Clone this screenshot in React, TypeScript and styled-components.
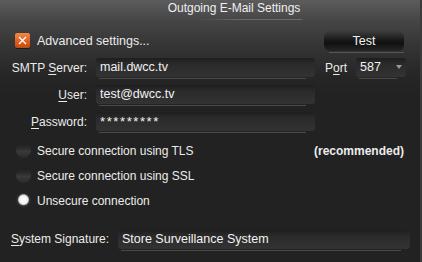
// Outgoing e-mail settings panel

import * as React from 'react'
import styled, { createGlobalStyle } from 'styled-components'

// ___________________________________________________________________

const Global = createGlobalStyle`
  html, body {
    margin: 0;
    padding: 0;
    background: #222;
  }
  body {
    font-family: "Liberation Sans", Arial, sans-serif;
    font-size: 12px;
    color: #ececec;
    -webkit-font-smoothing: none;
  }
`

const Window = styled.div`
  width: 422px;
  height: 262px;
  box-sizing: border-box;
  border-right: 2px solid #3b3b3b;
  background: linear-gradient(
    to bottom,
    #5c5c5c 0px,
    #464646 20px,
    #353535 45px,
    #262626 75px,
    #222 95px
  );
  display: flex;
  flex-direction: column;
  overflow: hidden;
  white-space: nowrap;
`

const Title = styled.div`
  height: 20px;
  display: flex;
  justify-content: center;
  padding-left: 48px;
  font-size: 12px;
  line-height: 17px;
  color: #f0f0f0;
`

const TitleText = styled.span`
  position: relative;
  &::after {
    content: '';
    position: absolute;
    left: 30px;
    right: -2px;
    bottom: 0;
    height: 1px;
    background: linear-gradient(to right, transparent, #6a6a6a 40%, #6a6a6a);
  }
`

const TopRow = styled.div`
  display: flex;
  align-items: center;
  justify-content: space-between;
  height: 21px;
  margin-top: 10px;
  padding: 0 16px 0 15px;
`

const CheckLabel = styled.label`
  display: flex;
  align-items: center;
  gap: 7px;
  font-size: 12.5px;
`

const CheckBox = styled.span`
  width: 15px;
  height: 15px;
  border-radius: 2px;
  background: linear-gradient(to bottom, #f08a4a 0%, #e0601c 55%, #c04a10 100%);
  box-shadow: 0 1px 0 #1a1a1a;
  display: flex;
  align-items: center;
  justify-content: center;
`

const TestButton = styled.button`
  position: relative;
  width: 80px;
  height: 20px;
  border: none;
  border-radius: 6px;
  background: linear-gradient(to bottom, #3c3c3c 0%, #1a1a1a 45%, #101010 60%, #262626 100%);
  color: #f2f2f2;
  font-family: inherit;
  font-size: 12.5px;
  padding: 0;
  &::after {
    content: '';
    position: absolute;
    left: 5px;
    right: 0;
    bottom: -2px;
    height: 1px;
    background: #555;
  }
`

const Form = styled.div`
  display: flex;
  flex-direction: column;
  gap: 8px;
  margin-top: 7px;
  padding-left: 7px;
`

const Row = styled.div`
  display: flex;
  align-items: center;
  height: 19px;
`

const Label = styled.span<{ $width?: number }>`
  width: ${p => p.$width ?? 80}px;
  text-align: right;
  margin-right: 9px;
`

const Key = styled.span`
  text-decoration: underline;
  text-underline-offset: 2px;
`

const Field = styled.div<{ $width: number }>`
  position: relative;
  width: ${p => p.$width}px;
  height: 19px;
  box-sizing: border-box;
  border-radius: 3px;
  background: linear-gradient(to bottom, #1e1e1e 0%, #2a2a2a 30%, #333 100%);
  padding-left: 4px;
  line-height: 18px;
  font-size: 12.5px;
  color: #f2f2f2;
  &::after {
    content: '';
    position: absolute;
    left: 3px;
    right: 9px;
    bottom: -2px;
    height: 1px;
    background: #4a4a4a;
  }
`

const Secret = styled.span`
  font-size: 13px;
  letter-spacing: 1.6px;
  line-height: 20px;
`

const PortLabel = styled.span`
  margin-left: 10px;
  margin-right: 9px;
`

const Arrow = styled.span`
  position: absolute;
  right: 4px;
  top: 7px;
  width: 0;
  height: 0;
  border-left: 3px solid transparent;
  border-right: 3px solid transparent;
  border-top: 4px solid #9a9a9a;
`

const Options = styled.div`
  display: flex;
  flex-direction: column;
  gap: 10px;
  margin-top: 12px;
  padding: 0 16px 0 16px;
`

const OptionRow = styled.div`
  display: flex;
  align-items: center;
  height: 15px;
`

const Radio = styled.span<{ $on?: boolean }>`
  width: 15px;
  height: 15px;
  border-radius: 50%;
  margin-right: 6px;
  background: ${p =>
    p.$on
      ? 'radial-gradient(circle at 50% 45%, #fff 0, #f4f4f4 4px, #bbb 5px, #333 6px, #252525 8px)'
      : 'linear-gradient(to bottom, #1e1e1e 0%, #2e2e2e 40%, #3a3a3a 55%, #2a2a2a 100%)'};
`

const Note = styled.span`
  margin-left: auto;
  font-weight: bold;
`

const Footer = styled.div`
  display: flex;
  align-items: center;
  height: 18px;
  margin-top: 22px;
  padding-left: 11px;
`

const FooterLabel = styled.span`
  width: 100px;
  margin-right: 7px;
`

// ___________________________________________________________________

const App = () => (
  <Window>
    <Global />
    <Title>
      <TitleText>Outgoing E-Mail Settings</TitleText>
    </Title>

    <TopRow>
      <CheckLabel>
        <CheckBox>
          <svg width="9" height="9" viewBox="0 0 9 9">
            <path d="M1 1 L8 8 M8 1 L1 8" stroke="#fff" strokeWidth="1.4" />
          </svg>
        </CheckBox>
        Advanced settings...
      </CheckLabel>
      <TestButton>Test</TestButton>
    </TopRow>

    <Form>
      <Row>
        <Label>
          SMTP <Key>S</Key>erver:
        </Label>
        <Field $width={219}>mail.dwcc.tv</Field>
        <PortLabel>
          P<Key>o</Key>rt
        </PortLabel>
        <Field $width={50}>
          587
          <Arrow />
        </Field>
      </Row>
      <Row>
        <Label>
          <Key>U</Key>ser:
        </Label>
        <Field $width={219}>test@dwcc.tv</Field>
      </Row>
      <Row>
        <Label>
          <Key>P</Key>assword:
        </Label>
        <Field $width={219}>
          <Secret>*********</Secret>
        </Field>
      </Row>
    </Form>

    <Options>
      <OptionRow>
        <Radio />
        Secure connection using TLS
        <Note>(recommended)</Note>
      </OptionRow>
      <OptionRow>
        <Radio />
        Secure connection using SSL
      </OptionRow>
      <OptionRow>
        <Radio $on />
        Unsecure connection
      </OptionRow>
    </Options>

    <Footer>
      <FooterLabel>
        <Key>S</Key>ystem Signature:
      </FooterLabel>
      <Field $width={292}>Store Surveillance System</Field>
    </Footer>
  </Window>
)

export default App
